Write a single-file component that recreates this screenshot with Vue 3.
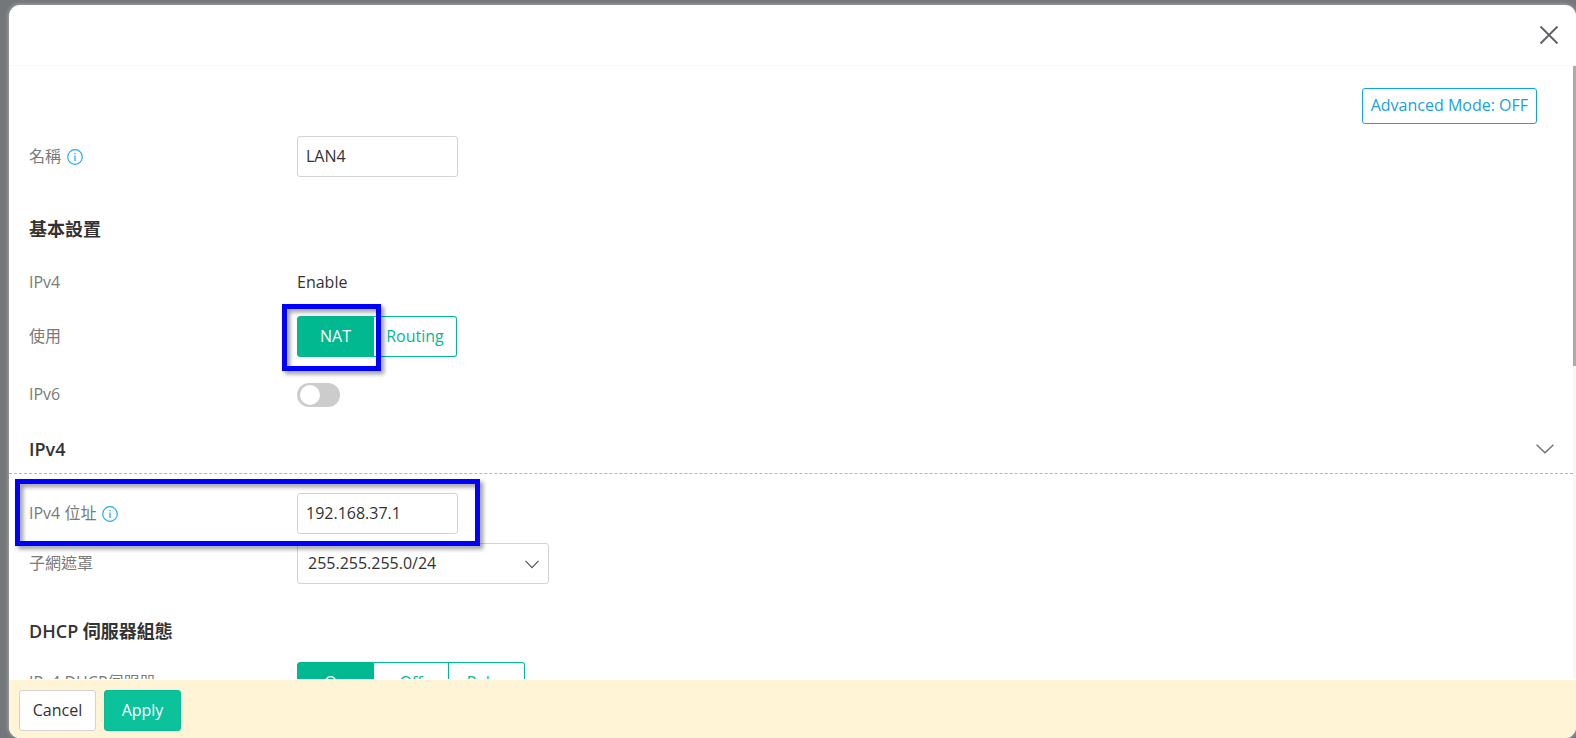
<script setup>
import { ref } from 'vue'

const name = ref('LAN4')
const usage = ref('NAT')
const ipv6 = ref(false)
const address = ref('192.168.37.1')
const mask = ref('255.255.255.0/24')
const dhcp = ref('On')
const usageOptions = ['NAT', 'Routing']
const dhcpOptions = ['On', 'Off', 'Relay']
</script>

<template>
  <div class="backdrop">
    <section class="dialog" role="dialog" aria-label="LAN4">
      <header class="dialog-head">
        <button class="icon-button" type="button" aria-label="Close">
          <svg width="20" height="20" viewBox="0 0 20 20" fill="none" stroke="#5c6064" stroke-width="1.8">
            <path d="M1.5 1.5 18.5 18.5M18.5 1.5 1.5 18.5" />
          </svg>
        </button>
      </header>

      <div class="viewport">
        <form class="content" @submit.prevent>
          <div class="toolbar">
            <button class="mode" type="button">Advanced Mode: OFF</button>
          </div>

          <div class="row name-row">
            <label class="label" for="lan-name">名稱
              <svg class="info" width="16" height="16" viewBox="0 0 16 16" fill="none" stroke="#26aaf0">
                <circle cx="8" cy="8" r="7.3" stroke-width="1.2" />
                <path d="M8 6.6V12M8 4V5.3" stroke-width="1.3" />
              </svg>
            </label>
            <input id="lan-name" v-model="name" class="field" type="text" />
          </div>

          <h2 class="title basic-title">基本設置</h2>

          <div class="row protocol-row">
            <span class="label">IPv4</span>
            <span class="value">Enable</span>
          </div>

          <div class="row usage-row">
            <span id="usage-label" class="label">使用</span>
            <div class="segments usage" role="group" aria-labelledby="usage-label">
              <button
                v-for="o in usageOptions"
                :key="o"
                type="button"
                class="segment"
                :class="{ active: usage === o }"
                :aria-pressed="usage === o"
                @click="usage = o"
              >{{ o }}</button>
              <span class="marker marker-usage"></span>
            </div>
          </div>

          <div class="row ipv6-row">
            <label class="label" for="ipv6">IPv6</label>
            <input id="ipv6" v-model="ipv6" class="toggle" type="checkbox" />
          </div>

          <div class="section">
            <h2 class="title">IPv4</h2>
            <button class="icon-button" type="button" aria-label="IPv4">
              <svg width="18" height="10" viewBox="0 0 18 10" fill="none" stroke="#707070" stroke-width="1.4">
                <path d="M.6 .7 9 8.7 17.4 .7" />
              </svg>
            </button>
          </div>

          <div class="row address-row">
            <label class="label" for="address">IPv4 位址
              <svg class="info" width="16" height="16" viewBox="0 0 16 16" fill="none" stroke="#26aaf0">
                <circle cx="8" cy="8" r="7.3" stroke-width="1.2" />
                <path d="M8 6.6V12M8 4V5.3" stroke-width="1.3" />
              </svg>
            </label>
            <input id="address" v-model="address" class="field" type="text" />
            <span class="marker marker-address"></span>
          </div>

          <div class="row mask-row">
            <label class="label" for="mask">子網遮罩</label>
            <div class="select-box">
              <select id="mask" v-model="mask" class="select">
                <option>255.255.255.0/24</option>
              </select>
              <svg class="arrow" width="14" height="9" viewBox="0 0 14 9" fill="none" stroke="#555" stroke-width="1.2">
                <path d="M.5 .8 7 7.6 13.5 .8" />
              </svg>
            </div>
          </div>

          <h2 class="title dhcp-title">DHCP 伺服器組態</h2>

          <div class="row dhcp-row">
            <span id="dhcp-label" class="label">IPv4 DHCP伺服器</span>
            <div class="segments dhcp" role="group" aria-labelledby="dhcp-label">
              <button
                v-for="o in dhcpOptions"
                :key="o"
                type="button"
                class="segment"
                :class="{ active: dhcp === o }"
                :aria-pressed="dhcp === o"
                @click="dhcp = o"
              >{{ o }}</button>
            </div>
          </div>
        </form>
        <div class="track"><div class="thumb"></div></div>
      </div>

      <footer class="actions">
        <button class="action" type="button">Cancel</button>
        <button class="action primary" type="button">Apply</button>
      </footer>
    </section>
  </div>
</template>

<style>
body {
  background: #73777a;
}
</style>

<style scoped>
* {
  box-sizing: border-box;
}

.backdrop {
  height: 100vh;
  padding: 5px 0 0 9px;
  overflow: hidden;
  background: #73777a;
  color: #333;
  font: 16px/24px 'Open Sans', 'Noto Sans CJK TC', sans-serif;
}

button,
input,
select {
  margin: 0;
  font: inherit;
  color: inherit;
}

button {
  padding: 0;
  cursor: pointer;
}

.dialog {
  display: flex;
  flex-direction: column;
  height: 100%;
  overflow: hidden;
  border-radius: 11px;
  background: #fff;
  box-shadow: 0 0 4px rgba(255, 255, 255, 0.5);
}

.dialog-head {
  flex: none;
  display: flex;
  align-items: center;
  justify-content: flex-end;
  height: 61px;
  padding-right: 17px;
  border-bottom: 1px solid #fafafa;
}

.icon-button {
  display: flex;
  border: 0;
  background: none;
}

.viewport {
  flex: 1;
  min-height: 0;
  display: flex;
}

.content {
  flex: 1;
  overflow: hidden;
  padding-top: 22px;
}

.toolbar {
  display: flex;
  justify-content: flex-end;
  padding-right: 36px;
}

.mode {
  height: 36px;
  padding: 0 8px 2px;
  border: 1px solid #0ea3ea;
  border-radius: 3px;
  background: #fff;
  color: #189fe6;
}

.row {
  position: relative;
  display: grid;
  grid-template-columns: 268px 1fr;
  align-items: center;
  height: 41px;
  padding-left: 20px;
}

.label,
.value {
  display: flex;
  align-items: center;
  gap: 6px;
  padding-bottom: 2px;
}

.label {
  color: #7a7a7a;
}

.info {
  margin-top: 2px;
}

.name-row { margin-top: 12px; }
.basic-title { margin-top: 40px; }
.protocol-row { margin-top: 21px; }
.usage-row { margin-top: 13px; }
.ipv6-row { margin-top: 17px; }
.address-row { margin-top: 19px; }
.mask-row { margin-top: 9px; }
.dhcp-title { margin-top: 35px; }
.dhcp-row { margin-top: 19px; }

.title {
  margin-bottom: 0;
  padding-left: 20px;
  font-size: 18px;
  line-height: 24px;
  font-weight: 600;
}

.field {
  width: 161px;
  height: 41px;
  padding: 0 8px 2px;
  border: 1px solid #d3d3d3;
  border-radius: 3px;
  background: #fff;
  outline: 0;
}

.segments {
  position: relative;
  display: flex;
  height: 41px;
}

.usage { width: 160px; }
.dhcp { width: 228px; }

.segment {
  flex: 1 1 auto;
  padding: 0 12px 2px;
  border: 1px solid #00b990;
  border-left-width: 0;
  background: #fff;
  color: #05b993;
}

.dhcp .segment {
  flex: 1 1 0;
}

.usage .segment:first-child {
  flex: none;
  width: 77px;
}

.segment:first-child {
  border-left-width: 1px;
  border-radius: 3px 0 0 3px;
}

.segment:nth-last-child(1 of .segment) {
  border-radius: 0 3px 3px 0;
}

.segment.active {
  background: #00b990;
  color: #fff;
}

.toggle {
  appearance: none;
  width: 43px;
  height: 24px;
  padding: 2px 3px;
  border-radius: 12px;
  background: #ccc;
}

.toggle::before {
  content: '';
  display: block;
  width: 20px;
  height: 20px;
  border-radius: 50%;
  background: #fff;
}

.toggle:checked {
  background: #00b990;
}

.toggle:checked::before {
  margin-left: auto;
}

.section {
  display: flex;
  align-items: center;
  justify-content: space-between;
  height: 49px;
  margin-top: 10px;
  padding-right: 19px;
  border-bottom: 1px dashed #b5b5b5;
}

.section .title {
  margin-top: 0;
}

.select-box {
  position: relative;
  width: 252px;
}

.select {
  appearance: none;
  display: block;
  width: 100%;
  height: 41px;
  padding: 0 32px 2px 10px;
  border: 1px solid #d3d3d3;
  border-radius: 3px;
  background: #fff;
}

.arrow {
  position: absolute;
  top: 17px;
  right: 10px;
  pointer-events: none;
}

.marker {
  position: absolute;
  z-index: 1;
  height: 67px;
  border: 5px solid #00f;
  filter: drop-shadow(3px 3px 2px rgba(0, 0, 0, 0.4));
  pointer-events: none;
}

.marker-usage {
  top: -12px;
  left: -15px;
  width: 99px;
}

.marker-address {
  top: -14px;
  left: 6px;
  width: 465px;
}

.track {
  width: 3px;
  background: #f8f8f8;
}

.thumb {
  height: 49%;
  background: #ababab;
}

.actions {
  flex: none;
  display: flex;
  gap: 8px;
  height: 59px;
  padding: 10px;
  border-top: 1px solid #fff;
  background: #fff4d5;
}

.action {
  width: 77px;
  height: 41px;
  padding-bottom: 2px;
  border: 1px solid #d3d3d3;
  border-radius: 3px;
  background: #fff;
}

.action.primary {
  border-color: #08bd96;
  background: #0bc29b;
  color: #fff;
}
</style>
